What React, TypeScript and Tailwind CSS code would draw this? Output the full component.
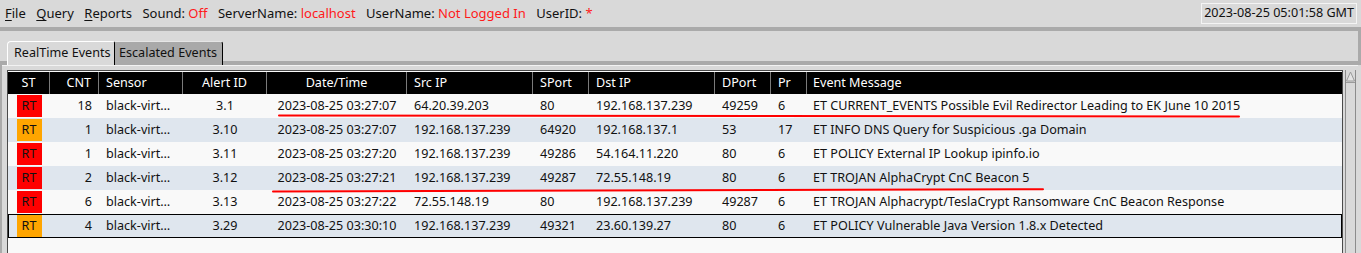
import React from "react";

type Row = {
  st: "red" | "orange";
  cnt: string;
  alert: string;
  time: string;
  src: string;
  sport: string;
  dst: string;
  dport: string;
  pr: string;
  msg: string;
};

const rows: Row[] = [
  { st: "red", cnt: "18", alert: "3.1", time: "2023-08-25 03:27:07", src: "64.20.39.203", sport: "80", dst: "192.168.137.239", dport: "49259", pr: "6", msg: "ET CURRENT_EVENTS Possible Evil Redirector Leading to EK June 10 2015" },
  { st: "orange", cnt: "1", alert: "3.10", time: "2023-08-25 03:27:07", src: "192.168.137.239", sport: "64920", dst: "192.168.137.1", dport: "53", pr: "17", msg: "ET INFO DNS Query for Suspicious .ga Domain" },
  { st: "red", cnt: "1", alert: "3.11", time: "2023-08-25 03:27:20", src: "192.168.137.239", sport: "49286", dst: "54.164.11.220", dport: "80", pr: "6", msg: "ET POLICY External IP Lookup ipinfo.io" },
  { st: "red", cnt: "2", alert: "3.12", time: "2023-08-25 03:27:21", src: "192.168.137.239", sport: "49287", dst: "72.55.148.19", dport: "80", pr: "6", msg: "ET TROJAN AlphaCrypt CnC Beacon 5" },
  { st: "red", cnt: "6", alert: "3.13", time: "2023-08-25 03:27:22", src: "72.55.148.19", sport: "80", dst: "192.168.137.239", dport: "49287", pr: "6", msg: "ET TROJAN Alphacrypt/TeslaCrypt Ransomware CnC Beacon Response" },
  { st: "orange", cnt: "4", alert: "3.29", time: "2023-08-25 03:30:10", src: "192.168.137.239", sport: "49321", dst: "23.60.139.27", dport: "80", pr: "6", msg: "ET POLICY Vulnerable Java Version 1.8.x Detected" },
];

const cols = "grid grid-cols-[42px_49px_84px_84px_140px_126px_56px_126px_56px_36px_1fr]";

function MenuItem({ label }: { label: string }) {
  return (
    <span>
      <span className="underline underline-offset-2">{label[0]}</span>
      {label.slice(1)}
    </span>
  );
}

function Status({ label, value }: { label: string; value: string }) {
  return (
    <span>
      {label} <span className="text-[#ff1a1a]">{value}</span>
    </span>
  );
}

export default function App() {
  return (
    <div className="relative w-[1361px] h-[253px] overflow-hidden bg-[#d9d9d9] text-[12.6px] text-[#111] font-['Noto_Sans',sans-serif] leading-none">
      {/* Menu bar */}
      <div className="h-[27px] flex items-center pl-[5px] pr-[4px] text-[13px]">
        <div className="flex items-center gap-[10.5px]">
          <MenuItem label="File" />
          <MenuItem label="Query" />
          <MenuItem label="Reports" />
          <Status label="Sound:" value="Off" />
          <Status label="ServerName:" value="localhost" />
          <Status label="UserName:" value="Not Logged In" />
          <Status label="UserID:" value="*" />
        </div>
        <div className="ml-auto h-[21px] px-[2px] flex items-center border border-[#f4f4f4] text-[12.6px]">
          2023-08-25 05:01:58 GMT
        </div>
      </div>

      {/* Tab bar */}
      <div className="h-[38px] border-t-4 border-b-4 border-r-[3px] border-[#aaaaaa]">
        <div className="h-[29px] pt-[5px] pl-[7px] flex items-end border-b border-[#f2f2f2] box-content">
          <div className="h-[24px] w-[108px] pl-[6px] flex items-center bg-[#d9d9d9] border-l border-t border-white border-r border-r-black rounded-tl-[4px] rounded-tr-[2px]">
            RealTime Events
          </div>
          <div className="h-[24px] w-[108px] pl-[4px] flex items-center bg-[#a9a9a9] border-t border-[#e6e6e6] border-r border-r-black rounded-tr-[3px]">
            Escalated Events
          </div>
        </div>
      </div>

      {/* Events pane */}
      <div className="flex h-[188px] border-l-2 border-[#aaaaaa] pl-[5px] pt-[5px]">
        <div className="w-[1336px] flex flex-col border-l border-t border-r border-[#4a4a4a] pt-[1px] bg-[#f9f9f9]">
          <div className={`${cols} h-[22px] bg-black text-white`}>
            <div className="flex items-center justify-center border-r border-[#7a7a7a]">ST</div>
            <div className="flex items-center justify-end pr-[7px] border-r border-[#7a7a7a]">CNT</div>
            <div className="flex items-center px-[7px] border-r border-[#7a7a7a]">Sensor</div>
            <div className="flex items-center justify-center border-r border-[#7a7a7a]">Alert ID</div>
            <div className="flex items-center justify-center border-r border-[#7a7a7a]">Date/Time</div>
            <div className="flex items-center px-[7px] border-r border-[#7a7a7a]">Src IP</div>
            <div className="flex items-center px-[7px] border-r border-[#7a7a7a]">SPort</div>
            <div className="flex items-center px-[7px] border-r border-[#7a7a7a]">Dst IP</div>
            <div className="flex items-center px-[7px] border-r border-[#7a7a7a]">DPort</div>
            <div className="flex items-center px-[7px] border-r border-[#7a7a7a]">Pr</div>
            <div className="flex items-center px-[6px]">Event Message</div>
          </div>
          {rows.map((r, i) => (
            <div
              key={i}
              className={`${cols} h-[24px] ${i % 2 === 1 ? "bg-[#dfe6ee]" : "bg-[#f9f9f9]"} ${i === 5 ? "outline-1 outline-black -outline-offset-1" : ""}`}
            >
              <div className="flex items-center justify-center">
                <span className={`w-[25px] h-[22px] flex items-center justify-center ${r.st === "red" ? "bg-[#ff0000]" : "bg-[#ffa500]"}`}>RT</span>
              </div>
              <div className="flex items-center justify-end pr-[7px]">{r.cnt}</div>
              <div className="flex items-center px-[7px]">black-virt…</div>
              <div className="flex items-center justify-center">{r.alert}</div>
              <div className="flex items-center justify-center">{r.time}</div>
              <div className="flex items-center px-[7px]">{r.src}</div>
              <div className="flex items-center px-[7px]">{r.sport}</div>
              <div className="flex items-center px-[7px]">{r.dst}</div>
              <div className="flex items-center px-[7px]">{r.dport}</div>
              <div className="flex items-center px-[7px]">{r.pr}</div>
              <div className="flex items-center px-[6px] whitespace-nowrap">{r.msg}</div>
            </div>
          ))}
        </div>
        {/* Scrollbar */}
        <div className="ml-[2px] w-[11px] border-x border-[#8c8c8c] bg-[#d9d9d9] flex flex-col">
          <svg width="9" height="12" viewBox="0 0 9 12" className="mt-[1px]">
            <polygon points="4.5,1 8.5,10 0.5,10" fill="#e4e4e4" stroke="#9a9a9a" strokeWidth="1" />
            <line x1="0" y1="11.5" x2="9" y2="11.5" stroke="#9a9a9a" />
          </svg>
        </div>
      </div>

      {/* Red annotation underlines */}
      <svg className="absolute left-0 top-0 pointer-events-none" width="1361" height="253">
        <path d="M279 115.6 Q760 116.6 1239 116.4" fill="none" stroke="#ff0000" strokeWidth="2" strokeLinecap="round" />
        <path d="M273 191.6 Q650 190.6 1043 189.2" fill="none" stroke="#ff0000" strokeWidth="2" strokeLinecap="round" />
      </svg>
    </div>
  );
}
